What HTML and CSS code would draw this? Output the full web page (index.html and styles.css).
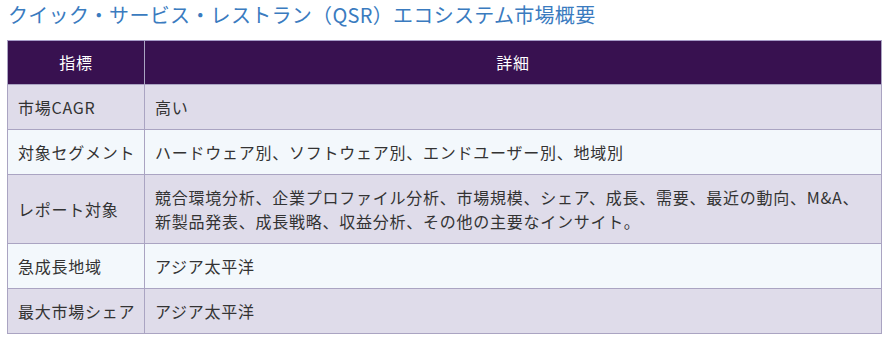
FILE: index.html
```html
<!DOCTYPE html>
<html lang="ja">
<head>
<meta charset="utf-8">
<link rel="stylesheet" href="styles.css">
</head>
<body>
<h2 class="title">クイック・サービス・レストラン（QSR）エコシステム市場概要</h2>
<table class="summary">
  <thead>
    <tr><th class="col-metric">指標</th><th>詳細</th></tr>
  </thead>
  <tbody>
    <tr><td class="metric">市場CAGR</td><td>高い</td></tr>
    <tr><td class="metric">対象セグメント</td><td>ハードウェア別、ソフトウェア別、エンドユーザー別、地域別</td></tr>
    <tr><td class="metric">レポート対象</td><td>競合環境分析、企業プロファイル分析、市場規模、シェア、成長、需要、最近の動向、M&amp;A、新製品発表、成長戦略、収益分析、その他の主要なインサイト。</td></tr>
    <tr><td class="metric">急成長地域</td><td>アジア太平洋</td></tr>
    <tr><td class="metric">最大市場シェア</td><td>アジア太平洋</td></tr>
  </tbody>
</table>
</body>
</html>
```
FILE: styles.css
```css
html, body {
  margin: 0;
  padding: 0;
  background: #ffffff;
}
body {
  padding: 0 12px 0 7px;
  font-family: "Noto Sans CJK JP", "Noto Sans", sans-serif;
  color: #333333;
}
.title {
  margin: 0;
  padding: 0 0 0 1px;
  height: 40px;
  line-height: 30px;
  font-size: 20px;
  letter-spacing: 0.3px;
  font-weight: normal;
  color: #3a7bbf;
}
.summary {
  width: 875px;
  border-collapse: collapse;
  font-size: 16px;
  line-height: 24px;
  letter-spacing: 0.75px;
}
.summary th,
.summary td {
  border: 1px solid #aaa4c2;
  padding: 10px 10px;
  text-align: left;
  vertical-align: middle;
}
.summary th {
  background: #381150;
  color: #ffffff;
  font-weight: normal;
  text-align: center;
  padding: 9px 10px 10px;
  border-top-color: #a79bc8;
}
.summary .col-metric {
  width: 116px;
}
.summary .metric {
  white-space: nowrap;
  padding-right: 4px;
}
.summary tbody tr:nth-child(odd) td {
  background: #dfdcea;
}
.summary tbody tr:nth-child(even) td {
  background: #f3f8fc;
}
```
